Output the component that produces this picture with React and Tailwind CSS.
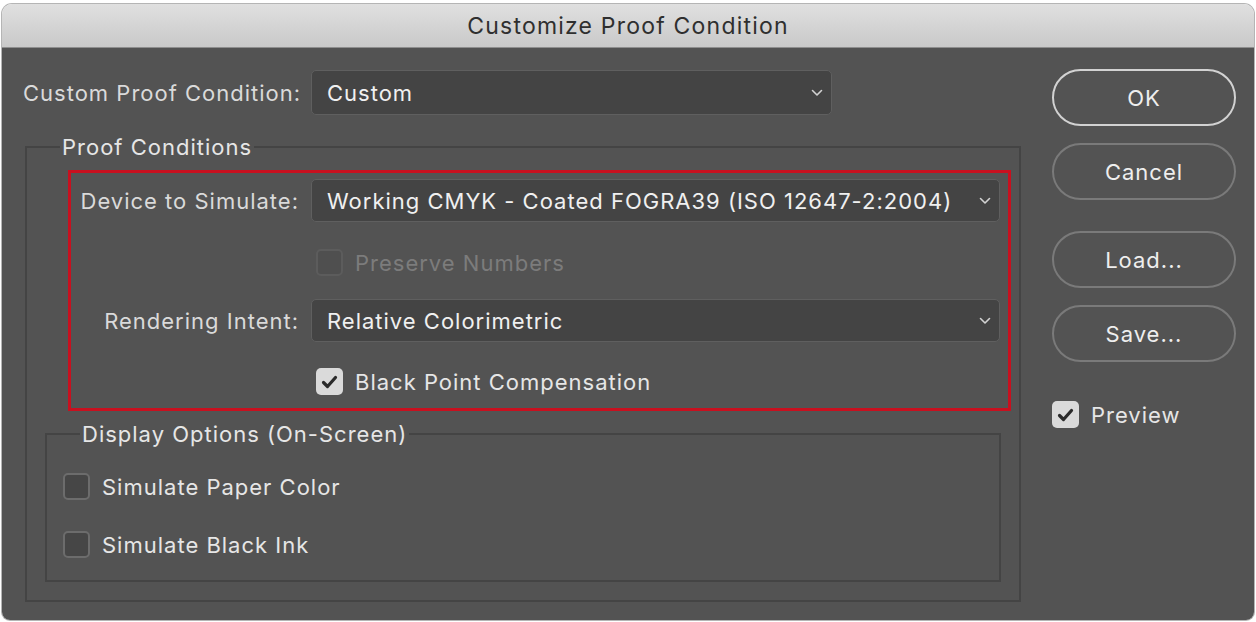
import React from "react";

function Chevron() {
  return (
    <svg width="12" height="8" viewBox="0 0 12 8" className="shrink-0">
      <polyline
        points="1.5,1.5 6,6 10.5,1.5"
        fill="none"
        stroke="#d2d2d2"
        strokeWidth="1.6"
        strokeLinecap="round"
        strokeLinejoin="round"
      />
    </svg>
  );
}

function Select({ value, className = "" }) {
  return (
    <div
      className={`h-[43px] flex items-center justify-between pl-[15px] pr-[8px] bg-[#444444] border border-[#5f5f5f] rounded-[5px] text-[#f0f0f0] ${className}`}
    >
      <span>{value}</span>
      <Chevron />
    </div>
  );
}

function Checkbox({ checked, disabled, label }) {
  return (
    <div className="flex items-center gap-[12px]">
      {checked ? (
        <div className="w-[27px] h-[27px] rounded-[5px] bg-[#dadada] flex items-center justify-center">
          <svg width="17" height="14" viewBox="0 0 17 14">
            <polyline
              points="2.5,7.5 6.5,11.5 14.5,2.5"
              fill="none"
              stroke="#2b2b2b"
              strokeWidth="3.2"
              strokeLinecap="round"
              strokeLinejoin="round"
            />
          </svg>
        </div>
      ) : disabled ? (
        <div className="w-[27px] h-[27px] rounded-[5px] bg-[#4f4f4f] border-2 border-[#5c5c5c]" />
      ) : (
        <div className="w-[27px] h-[27px] rounded-[5px] bg-[#464646] border-2 border-[#6c6c6c]" />
      )}
      <span className={disabled ? "text-[#7c7c7c]" : "text-[#e6e6e6]"}>
        {label}
      </span>
    </div>
  );
}

function Button({ children, primary }) {
  return (
    <div
      className={`h-[57px] w-[184px] rounded-full flex items-center justify-center text-[#eeeeee] border-2 ${
        primary ? "border-[#d2d2d2]" : "border-[#7a7a7a]"
      }`}
    >
      {children}
    </div>
  );
}

export default function App() {
  return (
    <div
      className="w-[1256px] h-[622px] bg-white pt-[4px] px-[2px] pb-[2px] text-[22px] leading-[26px] tracking-[1px]"
      style={{ fontFamily: "Inter, 'Noto Sans', sans-serif" }}
    >
      <div className="h-[616px] rounded-t-[10px] rounded-b-[8px] overflow-hidden flex flex-col shadow-[0_0_0_1px_#b5b5b5]">
        {/* Title bar */}
        <div className="h-[44px] shrink-0 bg-gradient-to-b from-[#e0e0e0] to-[#c9c9c9] border-b border-[#8e8e8e] flex items-center justify-center text-[#2f2f2f] text-[23px] tracking-[1.2px]">
          Customize Proof Condition
        </div>

        {/* Body */}
        <div className="flex-1 bg-[#535353] flex">
          <div className="w-[1019px] shrink-0">
            {/* Custom proof condition row */}
            <div className="mt-[22px] pl-[21px] flex items-center h-[45px]">
              <span className="w-[276px] whitespace-nowrap text-[#dadada]">Custom Proof Condition:</span>
              <Select value="Custom" className="ml-[12px] w-[521px] h-[45px]" />
            </div>

            {/* Proof Conditions */}
            <fieldset className="mt-[19px] ml-[23px] w-[996px] border-2 border-[#444444] pb-[18px]">
              <legend className="ml-[33px] px-[2px] text-[#e6e6e6]">Proof Conditions</legend>

              <div className="mt-[10px] ml-[41px] w-[943px] border-[3px] border-[#c8101f] pt-[6px] pb-[13px] pr-[8px]">
                <div className="flex items-center">
                  <span className="w-[228px] text-right whitespace-nowrap text-[#dadada]">Device to Simulate:</span>
                  <Select
                    value="Working CMYK - Coated FOGRA39 (ISO 12647-2:2004)"
                    className="ml-[12px] flex-1"
                  />
                </div>
                <div className="mt-[27px] ml-[245px]">
                  <Checkbox disabled label="Preserve Numbers" />
                </div>
                <div className="mt-[23px] flex items-center">
                  <span className="w-[228px] text-right whitespace-nowrap text-[#dadada]">Rendering Intent:</span>
                  <Select value="Relative Colorimetric" className="ml-[12px] flex-1" />
                </div>
                <div className="mt-[26px] ml-[245px]">
                  <Checkbox checked label="Black Point Compensation" />
                </div>
              </div>

              {/* Display Options */}
              <fieldset className="mt-[10px] ml-[18px] w-[956px] border-2 border-[#444444] pl-[16px] pb-[22px]">
                <legend className="ml-[17px] px-[2px] text-[#e6e6e6]">Display Options (On-Screen)</legend>
                <div className="mt-[26px]">
                  <Checkbox label="Simulate Paper Color" />
                </div>
                <div className="mt-[31px]">
                  <Checkbox label="Simulate Black Ink" />
                </div>
              </fieldset>
            </fieldset>
          </div>

          {/* Buttons */}
          <div className="ml-[31px] pt-[21px] flex flex-col">
            <Button primary>OK</Button>
            <div className="mt-[17px]">
              <Button>Cancel</Button>
            </div>
            <div className="mt-[31px]">
              <Button>Load...</Button>
            </div>
            <div className="mt-[17px]">
              <Button>Save...</Button>
            </div>
            <div className="mt-[39px]">
              <Checkbox checked label="Preview" />
            </div>
          </div>
        </div>
      </div>
    </div>
  );
}
